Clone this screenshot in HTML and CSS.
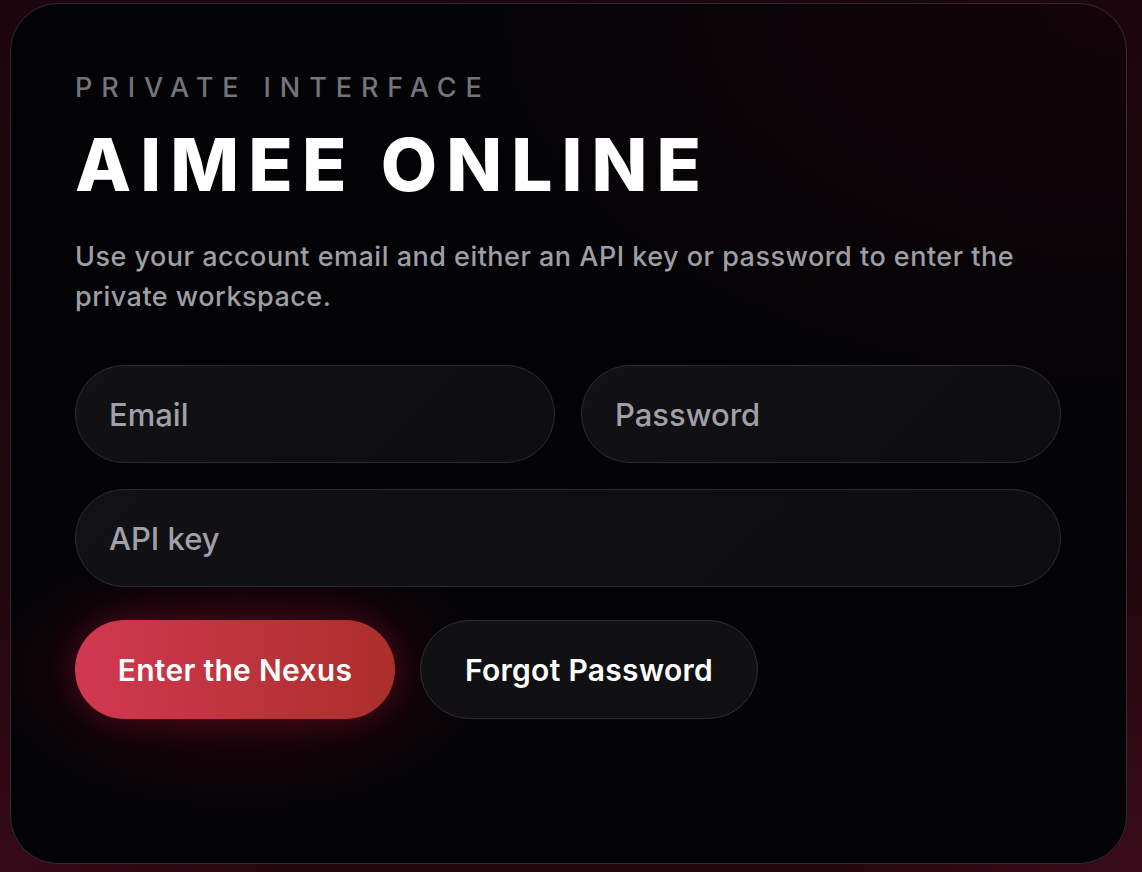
FILE: index.html
```html
<!DOCTYPE html>
<html lang="en">
<head>
    <meta charset="UTF-8">
    <meta name="viewport" content="width=device-width, initial-scale=1.0">
    <title>Aimee Online</title>
    <link rel="stylesheet" href="styles.css">
</head>
<body>
    <main class="card">
        <p class="eyebrow">Private Interface</p>
        <h1 class="title">AIMEE ONLINE</h1>
        <p class="lead">Use your account email and either an API key or password to enter the private workspace.</p>

        <form class="login" onsubmit="event.preventDefault();">
            <div class="row">
                <input class="field" type="email" placeholder="Email">
                <input class="field" type="password" placeholder="Password">
            </div>
            <input class="field" type="text" placeholder="API key">
            <div class="actions">
                <button class="btn primary" type="submit">Enter the Nexus</button>
                <button class="btn ghost" type="button">Forgot Password</button>
            </div>
        </form>
    </main>
</body>
</html>
```

FILE: styles.css
```css
html, body {
    margin: 0;
    height: 100%;
}
body {
    font-family: Inter, "Noto Sans", sans-serif;
    background:
        radial-gradient(circle at 100% 100%, #3a0b1a 0, transparent 320px),
        radial-gradient(circle at 0% 100%, #360a18 0, transparent 300px),
        linear-gradient(180deg, #1c050c, #24070f);
    overflow: hidden;
}
.card {
    box-sizing: border-box;
    width: 1117px;
    height: 861px;
    margin: 3px 0 0 10px;
    padding: 70px 65px 0 64px;
    border: 1px solid #2e2d31;
    border-radius: 48px;
    background:
        radial-gradient(ellipse 260px 140px at 230px 670px, rgba(120, 10, 35, 0.35), transparent),
        radial-gradient(ellipse 700px 420px at 100% 0%, rgba(40, 6, 16, 0.45), transparent),
        #030305;
}
.eyebrow {
    margin: 0;
    font-size: 27px;
    line-height: 1;
    font-weight: 500;
    letter-spacing: 0.33em;
    text-transform: uppercase;
    color: #75747c;
}
.title {
    margin: 27px 0 0;
    font-size: 73px;
    line-height: 1;
    font-weight: 800;
    letter-spacing: 0.125em;
    color: #ffffff;
}
.lead {
    margin: 36px 0 0;
    font-size: 27px;
    line-height: 40px;
    font-weight: 500;
    letter-spacing: 0.018em;
    color: #9e9ea5;
}
.login {
    margin-top: 48px;
    display: flex;
    flex-direction: column;
    gap: 26px;
}
.row {
    display: grid;
    grid-template-columns: 1fr 1fr;
    gap: 26px;
}
.field {
    box-sizing: border-box;
    width: 100%;
    height: 98px;
    padding: 0 33px;
    border: 1.5px solid #2c2b2f;
    border-radius: 49px;
    background: linear-gradient(135deg, #121113, #0d0c0e);
    font-family: inherit;
    font-size: 31px;
    font-weight: 500;
    color: #e6e6ea;
    outline: none;
}
.field::placeholder {
    color: #9fa0aa;
}
.actions {
    margin-top: 7px;
    display: flex;
    gap: 25px;
}
.btn {
    box-sizing: border-box;
    height: 99px;
    padding: 0 30px;
    border-radius: 50px;
    font-family: inherit;
    font-size: 30px;
    font-weight: 600;
    letter-spacing: 0.01em;
    color: #ffffff;
    cursor: pointer;
}
.primary {
    width: 320px;
    border: none;
    background: linear-gradient(90deg, #d23852, #ab2f2b);
    box-shadow: 0 0 34px rgba(190, 20, 55, 0.35);
}
.ghost {
    width: 338px;
    border: 1.5px solid #2f2e31;
    background: #111113;
}
```
